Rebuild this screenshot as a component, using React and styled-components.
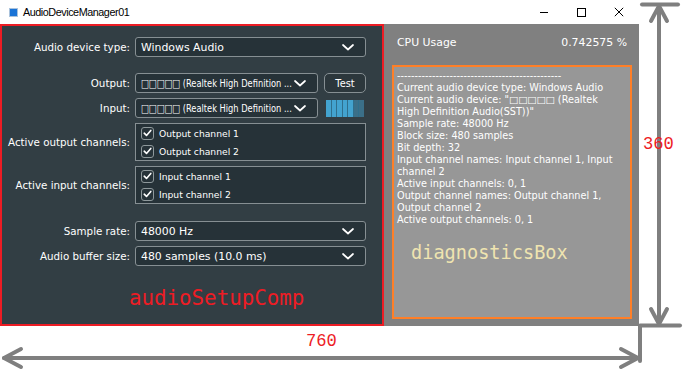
import React from "react";
import styled, { createGlobalStyle } from "styled-components";

const GlobalStyle = createGlobalStyle`
  html, body { margin: 0; padding: 0; background: #ffffff; }
  body { width: 684px; height: 375px; overflow: hidden; font-family: "DejaVu Sans", Verdana, sans-serif; }
`;

const Canvas = styled.div`
  position: relative;
  width: 684px;
  height: 375px;
  background: #ffffff;
`;

const Window = styled.div`
  width: 639px;
  display: flex;
  flex-direction: column;
`;

const TitleBar = styled.div`
  height: 24px;
  display: flex;
  align-items: center;
  background: #ffffff;
`;

const AppIcon = styled.svg`
  margin-left: 9px;
  flex: none;
`;

const Title = styled.span`
  margin-left: 5px;
  font-family: "Liberation Sans", Arial, sans-serif;
  font-size: 10.8px;
  letter-spacing: -0.45px;
  color: #000000;
`;

const Controls = styled.div`
  margin-left: auto;
  display: flex;
  height: 24px;
`;

const CtrlButton = styled.div`
  width: ${(p) => p.$w}px;
  height: 24px;
  display: flex;
  align-items: center;
  justify-content: center;
`;

const Body = styled.div`
  display: flex;
  height: 302px;
`;

const SetupPanel = styled.div`
  box-sizing: border-box;
  width: 384px;
  border: 2px solid #ed1c24;
  background: #323e44;
  padding: 11px 16px 0 0;
  display: flex;
  flex-direction: column;
  gap: 5px;
  color: #ffffff;
`;

const Row = styled.div`
  display: flex;
  align-items: center;
  min-height: 20px;
  margin-top: ${(p) => p.$extra || 0}px;
`;

const Label = styled.div`
  width: 128px;
  flex: none;
  margin-right: 5px;
  text-align: right;
  font-size: 10.3px;
  white-space: nowrap;
  color: #ffffff;
`;

const Combo = styled.div`
  flex: 1;
  min-width: 0;
  box-sizing: border-box;
  height: 20px;
  border: 1px solid #868f93;
  border-radius: 3px;
  background: #263238;
  display: flex;
  align-items: center;
  padding: 0 11px 0 5px;
  font-size: 10.9px;
  color: #ffffff;
`;

const ComboTextClip = styled.div`
  flex: 1;
  min-width: 0;
  overflow: hidden;
  white-space: nowrap;
`;

const ComboText = styled.span`
  display: inline-block;
  white-space: nowrap;
  transform-origin: left center;
  transform: scaleX(${(p) => p.$squash || 1});
`;

const Chevron = () => (
  <svg width="12" height="7" viewBox="0 0 12 7" style={{ flex: "none" }}>
    <path d="M1 1 L6 5.5 L11 1" fill="none" stroke="#ffffff" strokeWidth="1.7" strokeLinecap="round" strokeLinejoin="round" />
  </svg>
);

const SideSlot = styled.div`
  width: 42px;
  flex: none;
  margin-left: 6px;
  height: 20px;
  display: flex;
  align-items: center;
  justify-content: center;
`;

const TestButton = styled.div`
  box-sizing: border-box;
  width: 42px;
  height: 20px;
  border: 1px solid #868f93;
  border-radius: 5px;
  background: #2c373c;
  display: flex;
  align-items: center;
  justify-content: center;
  font-size: 9.8px;
  color: #ffffff;
`;

const Meter = styled.div`
  width: 38px;
  height: 17px;
  display: flex;
  gap: 1px;
  background: #2f6f8c;
`;

const Segment = styled.div`
  flex: 1;
  background: ${(p) => (p.$on ? "#43a3cf" : "#3b6f88")};
`;

const ChannelList = styled.div`
  flex: 1;
  box-sizing: border-box;
  height: 38px;
  border: 1px solid #868f93;
  background: #263238;
  display: flex;
  flex-direction: column;
`;

const CheckRow = styled.div`
  height: 18px;
  display: flex;
  align-items: center;
  padding-left: 5px;
  font-size: 9.2px;
  color: #ffffff;
`;

const CheckBox = styled.div`
  box-sizing: border-box;
  width: 13px;
  height: 13px;
  flex: none;
  border: 1px solid #8e989b;
  border-radius: 3px;
  background: #263238;
  display: flex;
  align-items: center;
  justify-content: center;
  margin-right: 5px;
`;

const CompTag = styled.div`
  margin-top: 15px;
  padding-left: 127px;
  font-family: "DejaVu Sans Mono", monospace;
  font-size: 20.8px;
  line-height: 24px;
  color: #ed1c24;
  white-space: nowrap;
`;

const InfoPanel = styled.div`
  flex: 1;
  background: #808080;
  padding: 0 7px 7px 8px;
  display: flex;
  flex-direction: column;
  color: #ffffff;
`;

const CpuRow = styled.div`
  height: 36px;
  display: flex;
  align-items: center;
  justify-content: space-between;
  padding: 0 5px;
  font-size: 10.9px;
`;

const DiagBox = styled.div`
  flex: 1;
  margin-top: 5px;
  border: 2px solid #ff7f27;
  background: #979797;
  padding: 3px 3px;
  display: flex;
  flex-direction: column;
`;

const DiagLine = styled.div`
  font-size: 9.7px;
  line-height: 12px;
  white-space: pre;
  color: #ffffff;
`;

const DiagTag = styled.div`
  margin-top: 16px;
  margin-left: 14px;
  font-family: "DejaVu Sans Mono", monospace;
  font-size: 18.6px;
  line-height: 22px;
  color: #efe4b0;
  white-space: nowrap;
`;

const Overlay = styled.svg`
  position: absolute;
  left: 0;
  top: 0;
  pointer-events: none;
`;

const Dimension = styled.span`
  position: absolute;
  left: ${(p) => p.$x}px;
  top: ${(p) => p.$y}px;
  font-family: "Liberation Mono", monospace;
  font-size: 19px;
  line-height: 20px;
  color: #ed1c24;
  transform-origin: left top;
  transform: scaleX(0.9);
`;

const Check = () => (
  <svg width="9" height="8" viewBox="0 0 9 8">
    <path d="M1.2 4.2 L3.5 6.4 L7.8 1.4" fill="none" stroke="#ffffff" strokeWidth="1.6" strokeLinecap="round" strokeLinejoin="round" />
  </svg>
);

const ComboBox = ({ text, squash }) => (
  <Combo>
    <ComboTextClip>
      <ComboText $squash={squash}>{text}</ComboText>
    </ComboTextClip>
    <Chevron />
  </Combo>
);

const Channels = ({ names }) => (
  <ChannelList>
    {names.map((n) => (
      <CheckRow key={n}>
        <CheckBox>
          <Check />
        </CheckBox>
        {n}
      </CheckRow>
    ))}
  </ChannelList>
);

const deviceName = "\u25A1\u25A1\u25A1\u25A1\u25A1 (Realtek High Definition ...";

const diagLines = [
  "-----------------------------------------------",
  "Current audio device type: Windows Audio",
  "Current audio device: \"\u25A1\u25A1\u25A1\u25A1\u25A1 (Realtek",
  "High Definition Audio(SST))\"",
  "Sample rate: 48000 Hz",
  "Block size: 480 samples",
  "Bit depth: 32",
  "Input channel names: Input channel 1, Input",
  "channel 2",
  "Active input channels: 0, 1",
  "Output channel names: Output channel 1,",
  "Output channel 2",
  "Active output channels: 0, 1",
];

export default function App() {
  const meter = [1, 1, 1, 1, 1, 0, 0];
  return (
    <Canvas>
      <GlobalStyle />
      <Window>
        <TitleBar>
          <AppIcon width="9" height="9" viewBox="0 0 9 9">
            <rect x="0.5" y="0.5" width="8" height="8" fill="#1a73d6" stroke="#a9c2dc" />
          </AppIcon>
          <Title>AudioDeviceManager01</Title>
          <Controls>
            <CtrlButton $w={37}>
              <svg width="10" height="10" viewBox="0 0 10 10">
                <path d="M1 5.5 H9" stroke="#000" strokeWidth="1" />
              </svg>
            </CtrlButton>
            <CtrlButton $w={37}>
              <svg width="10" height="10" viewBox="0 0 10 10">
                <rect x="1.5" y="1.5" width="8" height="8" fill="none" stroke="#000" strokeWidth="1" />
              </svg>
            </CtrlButton>
            <CtrlButton $w={40}>
              <svg width="10" height="10" viewBox="0 0 10 10">
                <path d="M0.8 0.8 L9.2 9.2 M9.2 0.8 L0.8 9.2" stroke="#000" strokeWidth="1" />
              </svg>
            </CtrlButton>
          </Controls>
        </TitleBar>
        <Body>
          <SetupPanel>
            <Row>
              <Label>Audio device type:</Label>
              <ComboBox text="Windows Audio" />
            </Row>
            <Row $extra={11}>
              <Label>Output:</Label>
              <ComboBox text={deviceName} squash={0.76} />
              <SideSlot>
                <TestButton>Test</TestButton>
              </SideSlot>
            </Row>
            <Row>
              <Label>Input:</Label>
              <ComboBox text={deviceName} squash={0.76} />
              <SideSlot>
                <Meter>
                  {meter.map((on, i) => (
                    <Segment key={i} $on={on} />
                  ))}
                </Meter>
              </SideSlot>
            </Row>
            <Row>
              <Label>Active output channels:</Label>
              <Channels names={["Output channel 1", "Output channel 2"]} />
            </Row>
            <Row>
              <Label>Active input channels:</Label>
              <Channels names={["Input channel 1", "Input channel 2"]} />
            </Row>
            <Row $extra={12}>
              <Label>Sample rate:</Label>
              <ComboBox text="48000 Hz" />
            </Row>
            <Row>
              <Label>Audio buffer size:</Label>
              <ComboBox text="480 samples (10.0 ms)" />
            </Row>
            <CompTag>audioSetupComp</CompTag>
          </SetupPanel>
          <InfoPanel>
            <CpuRow>
              <span>CPU Usage</span>
              <span>0.742575 %</span>
            </CpuRow>
            <DiagBox>
              {diagLines.map((l, i) => (
                <DiagLine key={i}>{l}</DiagLine>
              ))}
              <DiagTag>diagnosticsBox</DiagTag>
            </DiagBox>
          </InfoPanel>
        </Body>
      </Window>

      <Overlay width="684" height="375" viewBox="0 0 684 375">
        <g fill="none" stroke="#7f7f7f" strokeWidth="4" strokeLinecap="round" strokeLinejoin="round">
          <path d="M4 358 H637" />
          <path d="M21 349 L4 358 L21 367" />
          <path d="M621 349 L638 358 L621 367" />
          <path d="M659 6 V324" />
          <path d="M651 21 L659 6 L667 21" />
          <path d="M651 309 L659 324 L667 309" />
          <path d="M642 4.5 H678" />
          <path d="M640 325.5 H680" />
          <path d="M640 326 V361" />
        </g>
      </Overlay>
      <Dimension $x={306} $y={331}>760</Dimension>
      <Dimension $x={643} $y={134}>360</Dimension>
    </Canvas>
  );
}
